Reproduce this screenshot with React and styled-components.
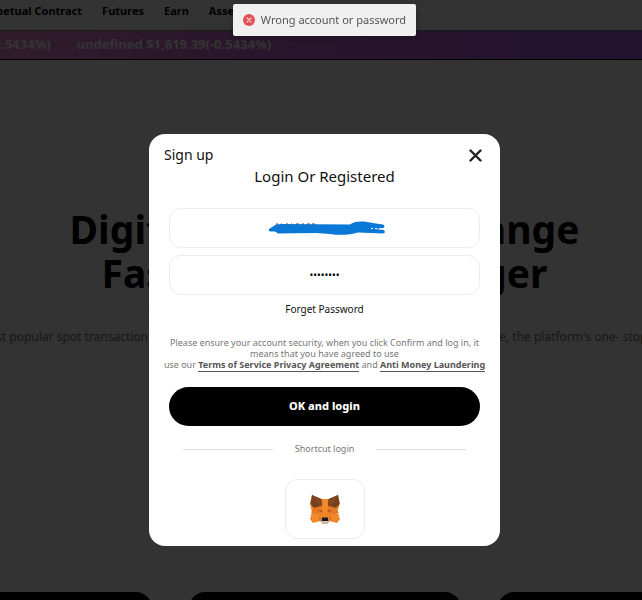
import React, { useState } from "react";
import styled, { createGlobalStyle } from "styled-components";

const App = () => {
  const [account, setAccount] = useState("");
  const [password, setPassword] = useState("12345678");
  const [open, setOpen] = useState(true);

  return (
    <>
      <GlobalStyle />
      <Page>
        <Nav>
          <NavLink href="#perpetual">Perpetual Contract</NavLink>
          <NavLink href="#futures">Futures</NavLink>
          <NavLink href="#earn">Earn</NavLink>
          <NavLink href="#assets">Assets</NavLink>
        </Nav>
        <Ticker>
          <span>undefined $1,619.39(-0.5434%)</span>
          <span>undefined $1,619.39(-0.5434%)</span>
        </Ticker>
        <Hero>
          <HeroTitle>
            Digital Currency Exchange
            <br />
            Faster, Better, Stronger
          </HeroTitle>
          <HeroText>
            <span>
              The most popular spot transaction, futures contract and financial
              management products all online, the platform's one- stop services
            </span>
          </HeroText>
        </Hero>
        <Cards>
          <DarkCard />
          <DarkCard />
          <DarkCard />
        </Cards>
      </Page>

      {open && (
        <Overlay>
          <Modal role="dialog" aria-label="Sign up">
            <ModalHeader>
              <span>Sign up</span>
              <CloseButton
                type="button"
                aria-label="Close"
                onClick={() => setOpen(false)}
              >
                <svg width="13" height="13" viewBox="0 0 13 13">
                  <path
                    d="M1.5 1.5 11.5 11.5M11.5 1.5 1.5 11.5"
                    stroke="#222"
                    strokeWidth="2.4"
                    strokeLinecap="round"
                  />
                </svg>
              </CloseButton>
            </ModalHeader>
            <Title>Login Or Registered</Title>

            <Form onSubmit={(e) => e.preventDefault()}>
              <Field>
                <Input
                  type="text"
                  aria-label="Account"
                  value={account}
                  onChange={({ target }) => setAccount(target.value)}
                />
                <Scribble />
              </Field>
              <Field>
                <Input
                  type="password"
                  aria-label="Password"
                  value={password}
                  onChange={({ target }) => setPassword(target.value)}
                />
              </Field>
              <Forget href="#forget">Forget Password</Forget>
              <Terms>
                Please ensure your account security, when you click Confirm and
                log in, it
                <br />
                means that you have agreed to use
                <br />
                use our <a href="#terms">
                  Terms of Service Privacy Agreement
                </a>{" "}
                and <a href="#aml">Anti Money Laundering</a>
              </Terms>
              <Submit type="submit">OK and login</Submit>
            </Form>

            <Shortcut>Shortcut login</Shortcut>
            <WalletButton type="button" aria-label="MetaMask">
              <Fox />
            </WalletButton>
          </Modal>
        </Overlay>
      )}

      <ToastArea>
        <Toast role="alert">
          <svg width="12" height="12" viewBox="0 0 12 12">
            <circle cx="6" cy="6" r="6" fill="#e05255" />
            <path
              d="M4 4 8 8M8 4 4 8"
              stroke="#fbdada"
              strokeWidth="1.1"
              strokeLinecap="round"
            />
          </svg>
          Wrong account or password
        </Toast>
      </ToastArea>
    </>
  );
};

export default App;

const Scribble = () => (
  <ScribbleSvg width="118" height="18" viewBox="0 0 118 18">
    <path
      d="M1 9 8 4.500 14 4 82 4.500C85 2 90 1 96 1.500L108 3.500 115 4.500Q118 6 115 8.500L107 9 116 10Q118 13 115 13.500L90 12.500C82 15 72 15.500 62 14L48 13 10 13.500 7 11.500 3 11.500Q0 11 1 9Z"
      fill="#0a78d6"
    />
    <path
      d="M8 4h2M13 4h1M18 4h2M23 4h1M28 4h3M34 4h2M39 4h3M44 4h3"
      stroke="#24557f"
      strokeWidth="1"
    />
    <path
      d="M103 8.500h2M107 8.500h2M111 8.500h4"
      stroke="#e8f3fc"
      strokeWidth="1.200"
    />
  </ScribbleSvg>
);

const Fox = () => (
  <svg width="32" height="32" viewBox="0 0 32 32">
    <path
      d="M3 2 12 6h8l9-4 2 8-3 10 3 6-3 4-7-2-3 3h-4l-3-3-7 2-3-4 2-6L1 10Z"
      fill="#ee8226"
    />
    <path d="M3 2 12.500 6 13 13 5 15 1.500 11Z" fill="#75401f" />
    <path d="M29 2 19.500 6 19 13 27 15 30.500 11Z" fill="#75401f" />
    <path d="M3 2 14 9 12 14 10 12Z" fill="#874620" />
    <path d="M29 2 18 9 20 14 22 12Z" fill="#874620" />
    <path d="M5 15 12 13 13 19 9 21 2 20Z" fill="#e87722" />
    <path d="M27 15 20 13 19 19 23 21 30 20Z" fill="#e87722" />
    <path d="M13 6h6l-1 14h-4Z" fill="#f28a2c" />
    <path d="M9 18 13 16.500 13.500 19.500Z" fill="#b85c22" />
    <path d="M23 18 19 16.500 18.500 19.500Z" fill="#b85c22" />
    <path d="M2 21 10 21 11 28 4 29Z" fill="#f28a2c" />
    <path d="M30 21 22 21 21 28 28 29Z" fill="#f28a2c" />
    <path d="M10 24 13 25 13 29 10 27Z" fill="#d8701f" />
    <path d="M22 24 19 25 19 29 22 27Z" fill="#d8701f" />
    <path d="M12.500 25h7l1 3-2.500 2.500h-4L11.500 28Z" fill="#c9c3bd" />
    <path d="M13 24.500h6l.5 3.500h-7Z" fill="#1d1a18" />
  </svg>
);

const GlobalStyle = createGlobalStyle`
  * {
    box-sizing: border-box;
  }

  body {
    margin: 0;
    font-family: "Noto Sans", sans-serif;
    color: #111;
    background: white;
  }
`;

const Page = styled.div`
  height: 100vh;
  overflow: hidden;
  display: flex;
  flex-direction: column;
`;

const Nav = styled.nav`
  height: 30px;
  margin-left: -22px;
  display: flex;
  flex-shrink: 0;
  gap: 20px;
  padding-top: 3px;
`;

const NavLink = styled.a`
  font-size: 11px;
  font-weight: bold;
  line-height: 16px;
  color: black;
  text-decoration: none;
  white-space: nowrap;
`;

const Ticker = styled.div`
  height: 30px;
  margin-left: -144px;
  padding-bottom: 2px;
  display: flex;
  flex-shrink: 0;
  align-items: center;
  gap: 26px;
  border-top: 1px solid #777;
  border-bottom: 1px solid black;
  background: linear-gradient(90deg, #fa9bc8, #d26edc 50%, #aa5af0);
  color: white;
  font-size: 13px;
  font-weight: bold;
  line-height: 16px;
  white-space: nowrap;
`;

const Hero = styled.section`
  flex: 1;
  padding: 147px 0 0 7px;
  text-align: center;
  background: radial-gradient(circle at 50% 60%, #faf5ff, white 60%);
`;

const HeroTitle = styled.h1`
  margin: 0;
  font-size: 39px;
  line-height: 44px;
  color: black;
  white-space: nowrap;
`;

const HeroText = styled.p`
  margin: 32px 0 0;
  display: flex;
  justify-content: center;
  font-size: 12px;
  line-height: 20px;
  color: #777;
  white-space: nowrap;
`;

const Cards = styled.div`
  height: 8px;
  display: flex;
  flex-shrink: 0;
  justify-content: center;
  gap: 37px;
  padding-left: 7px;
`;

const DarkCard = styled.div`
  width: 272px;
  height: 200px;
  flex-shrink: 0;
  border-radius: 16px;
  background: #08080c;
`;

const Overlay = styled.div`
  position: fixed;
  inset: 0;
  display: flex;
  align-items: flex-start;
  justify-content: center;
  padding: 134px 0 0 7px;
  background: rgba(0, 0, 0, 0.8);
`;

const Modal = styled.div`
  width: 351px;
  max-width: 100%;
  padding: 10px 15px 7px;
  display: flex;
  flex-direction: column;
  background: white;
  border-radius: 16px;
`;

const ModalHeader = styled.div`
  display: flex;
  align-items: center;
  justify-content: space-between;
  font-size: 14px;
  line-height: 22px;
`;

const CloseButton = styled.button`
  width: 20px;
  height: 20px;
  padding: 0;
  display: flex;
  align-items: center;
  justify-content: center;
  border: 0;
  background: none;
  cursor: pointer;
`;

const Title = styled.h2`
  margin: 0;
  font-size: 15px;
  font-weight: normal;
  line-height: 20px;
  text-align: center;
`;

const Form = styled.form`
  margin-top: 22px;
  padding: 0 5px;
  display: flex;
  flex-direction: column;
  align-items: center;
`;

const Field = styled.div`
  position: relative;
  width: 100%;
  margin-bottom: 7px;
`;

const Input = styled.input`
  width: 100%;
  height: 40px;
  display: block;
  border: 1px solid #ececec;
  border-radius: 12px;
  outline: none;
  background: white;
  font-family: "Noto Sans", sans-serif;
  font-size: 10px;
  color: black;
  text-align: center;
`;

const ScribbleSvg = styled.svg`
  position: absolute;
  top: 12px;
  left: 99px;
  pointer-events: none;
`;

const Forget = styled.a`
  font-size: 10px;
  line-height: 14px;
  color: #111;
  text-decoration: none;
`;

const Terms = styled.p`
  margin: 21px 0 17px;
  font-size: 9px;
  line-height: 11px;
  color: #777;
  text-align: center;
  white-space: nowrap;

  a {
    color: #555;
    font-weight: bold;
    text-decoration: none;
    border-bottom: 1px solid #555;
  }
`;

const Submit = styled.button`
  width: 100%;
  height: 39px;
  padding: 0 0 2px;
  border: 0;
  border-radius: 20px;
  background: black;
  color: white;
  font-family: "Noto Sans", sans-serif;
  font-size: 11px;
  font-weight: 800;
  cursor: pointer;
`;

const Shortcut = styled.div`
  margin: 16px 19px 23px;
  display: flex;
  align-items: center;
  gap: 22px;
  font-size: 9px;
  line-height: 14px;
  color: #777;

  &::before,
  &::after {
    content: "";
    flex: 1;
    height: 1px;
    background: #ddd;
  }
`;

const WalletButton = styled.button`
  width: 80px;
  height: 60px;
  padding: 0;
  align-self: center;
  display: flex;
  align-items: center;
  justify-content: center;
  border: 1px solid #ececec;
  border-radius: 12px;
  background: white;
  cursor: pointer;
`;

const ToastArea = styled.div`
  position: fixed;
  top: 4px;
  left: 0;
  right: 0;
  padding-left: 7px;
  display: flex;
  justify-content: center;
`;

const Toast = styled.div`
  height: 32px;
  padding: 0 10px;
  display: flex;
  align-items: center;
  gap: 6px;
  border-radius: 2px;
  background: #f0f0f0;
  box-shadow: 0 2px 8px rgba(0, 0, 0, 0.3);
  font-size: 11px;
  line-height: 16px;
  color: #555;
  white-space: nowrap;
`;
